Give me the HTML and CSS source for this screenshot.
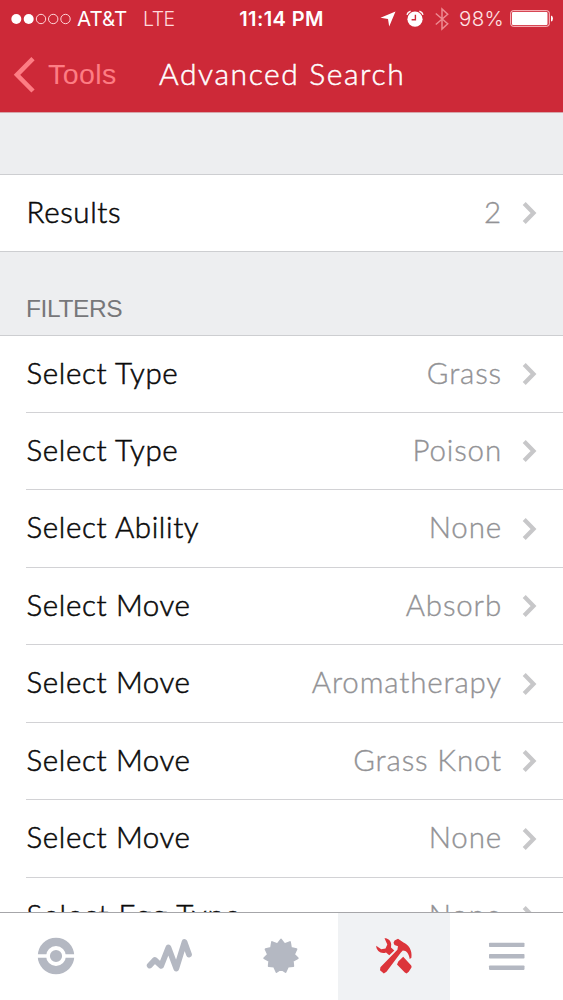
FILE: index.html
```html
<!DOCTYPE html>
<html lang="en">
<head>
<meta charset="utf-8">
<title>Advanced Search</title>
<link rel="stylesheet" href="styles.css">
</head>
<body>
<svg width="0" height="0" class="defs"><defs>
<symbol id="chev" viewBox="0 0 16 24"><path d="M2.2 2.6 11.5 12 2.2 21.4" fill="none" stroke="#c7c7c9" stroke-width="4.2"/></symbol>
</defs></svg>
<div class="screen">
  <header class="top">
    <div class="status">
      <div class="status-left">
        <svg class="signal" width="62" height="12" viewBox="0 0 62 12"><g fill="#fff"><circle cx="5.3" cy="6" r="5"/><circle cx="17.7" cy="6" r="5"/></g><g fill="none" stroke="#ffd5d8" stroke-width="1"><circle cx="30" cy="6" r="4.7"/><circle cx="42.2" cy="6" r="4.7"/><circle cx="54.5" cy="6" r="4.7"/></g></svg>
        <span class="carrier">AT&amp;T</span><span class="net">LTE</span>
      </div>
      <div class="time">11:14 PM</div>
      <div class="status-right">
        <svg width="16" height="16" viewBox="0 0 16 16"><path d="M15.5 .5 9.2 15.5 8 8 .5 6.8z" fill="#fff"/></svg>
        <svg class="alarm" width="18" height="18" viewBox="0 0 18 18"><circle cx="9" cy="9.2" r="7.6" fill="#fff"/><path d="M1 4.7Q1.7 2 4.6 1.3M17 4.7Q16.3 2 13.4 1.3" fill="none" stroke="#fff" stroke-width="1.5"/><path d="M9.4 4.8V9.8H5.6" fill="none" stroke="#cd2938" stroke-width="1.4"/></svg>
        <svg class="bt" width="14" height="24" viewBox="0 0 14 24"><path d="M.8 6.5 12.7 16.8 7 22V2L12.7 7.2.8 17.5" fill="none" stroke="#ed8a91" stroke-width="1.5"/></svg>
        <span class="pct">98%</span>
        <svg class="battery" width="44" height="17" viewBox="0 0 44 17"><rect x=".7" y=".7" width="38.6" height="15.6" rx="2.5" fill="none" stroke="#ffc9cd" stroke-width="1"/><rect x="2" y="2" width="35.5" height="13" rx="1" fill="#fff"/><path d="M41 5.5Q43 6 43 8.5T41 11.5z" fill="#fff"/></svg>
      </div>
    </div>
    <nav class="nav">
      <div class="back"><svg width="24" height="36" viewBox="0 0 24 36"><path d="M20 1.7 4 17.8 20 34" fill="none" stroke="#fd7d84" stroke-width="4.6"/></svg><span>Tools</span></div>
      <h1>Advanced Search</h1>
    </nav>
  </header>
  <main class="content">
    <div class="gap"></div>
    <section class="group results">
      <div class="row"><span class="label">Results</span><span class="value">2</span><svg class="chev"><use href="#chev"/></svg></div>
    </section>
    <h2>FILTERS</h2>
    <section class="group filters">
      <div class="row"><span class="label">Select Type</span><span class="value">Grass</span><svg class="chev"><use href="#chev"/></svg></div>
      <div class="row"><span class="label">Select Type</span><span class="value">Poison</span><svg class="chev"><use href="#chev"/></svg></div>
      <div class="row"><span class="label">Select Ability</span><span class="value">None</span><svg class="chev"><use href="#chev"/></svg></div>
      <div class="row"><span class="label">Select Move</span><span class="value">Absorb</span><svg class="chev"><use href="#chev"/></svg></div>
      <div class="row"><span class="label">Select Move</span><span class="value">Aromatherapy</span><svg class="chev"><use href="#chev"/></svg></div>
      <div class="row"><span class="label">Select Move</span><span class="value">Grass Knot</span><svg class="chev"><use href="#chev"/></svg></div>
      <div class="row"><span class="label">Select Move</span><span class="value">None</span><svg class="chev"><use href="#chev"/></svg></div>
      <div class="row"><span class="label wide">Select Egg Type</span><span class="value">None</span><svg class="chev"><use href="#chev"/></svg></div>
    </section>
  </main>
  <footer class="tabs">
    <div class="tab"><svg width="38" height="38" viewBox="0 0 38 38"><circle cx="19" cy="19" r="18.3" fill="#b4b8c2"/><path d="M0 19H38" stroke="#fff" stroke-width="3.6"/><circle cx="19" cy="19" r="8" fill="#b4b8c2" stroke="#fff" stroke-width="3.8"/></svg></div>
    <div class="tab"><svg width="46" height="38" viewBox="0 0 46 38"><path d="M3.7 27.5 8.8 22 15.2 27.8 22.4 9.5 30.3 30.5 38.5 4 43 16.5" transform="translate(0 1)" fill="none" stroke="#b4b8c2" stroke-width="5.8" stroke-linecap="round" stroke-linejoin="round"/></svg></div>
    <div class="tab"><svg width="38" height="38" viewBox="-19 -19 38 38"><path d="M0-16.5 3.7-11.8 9-14 10-8.2 15.5-6.8 13-1.5 16.8 2.2 11.8 5 12.3 10.2 7 10.7 4.6 16 0 13-4.6 16-7 10.7-12.3 10.2-11.8 5-16.8 2.2-13-1.5-15.5-6.8-10-8.2-9-14-3.7-11.8z" fill="#b4b8c2" stroke="#b4b8c2" stroke-width="1.8" stroke-linejoin="round"/></svg></div>
    <div class="tab active"><svg width="38" height="38" viewBox="0 0 38 38"><g fill="#dc343a"><path d="M9.5 1.2C12.8 1 16 3.7 16.2 7.2L16 10.4 19.3 13.5 14.3 18.2 11 15.4C6.5 17.5 1.2 14 1.2 8.8L6.2 12.2 10.5 11.4 12.3 7.4z"/><path d="M23.3 24.4 28.2 19.8 36.2 28.5Q37.2 30 36 31.3L33.7 34.8 31.6 36.6 29.8 35.6 22 27.4z"/><path d="M19.6 3.4 23 1.7 28.5 5.5C33.5 7.8 37.5 13 36.4 20.8L34.7 22C34 17 31.5 13.6 27.8 13.6L25.7 15.8 11.5 34.7 8.8 36.6 5 33.3 5.4 30.3 22.4 12.7 23 9.3 19.5 8 18.5 5.8z"/></g></svg></div>
    <div class="tab"><svg width="38" height="38" viewBox="0 0 38 38"><g fill="#b4b8c2"><rect x="1" y="5.7" width="35.5" height="4.4" rx=".8"/><rect x="1" y="17" width="35.5" height="4.6" rx=".8"/><rect x="1" y="28.5" width="35.5" height="4.4" rx=".8"/></g></svg></div>
  </footer>
</div>
</body>
</html>
```
FILE: styles.css
```css
* { box-sizing: border-box; }
body { margin: 0; font-family: Lato, sans-serif; background: #fff; }
.defs { display: none; }
svg { display: block; flex: none; }
.screen { width: 563px; height: 1000px; display: flex; flex-direction: column; overflow: hidden; }
.top { flex: none; height: 113px; background: #cd2938; color: #fff; border-bottom: 1px solid #d6a6ab; }
.status { height: 37px; display: grid; grid-template-columns: 1fr auto 1fr; align-items: center; font: 20px/24px Inter, sans-serif; white-space: nowrap; }
.status-left { display: flex; align-items: center; padding-left: 11px; }
.carrier { margin-left: 4px; width: 66px; font-size: 20.5px; letter-spacing: 0; }
.net { font-weight: 300; font-size: 19.5px; letter-spacing: -.5px; color: #ffd9dc; }
.time { font-weight: 600; font-size: 20px; letter-spacing: .4px; }
.status-right { display: flex; align-items: center; justify-content: flex-end; padding-right: 9px; }
.alarm { margin-left: 10px; }
.bt { margin-left: 11px; }
.pct { margin: 0 6px 0 10px; font-weight: 300; font-size: 20.5px; letter-spacing: .3px; color: #ffe3e5; }
.nav { height: 75px; display: grid; grid-template-columns: 159px 1fr; align-items: center; }
.back { display: flex; align-items: center; padding-left: 13px; color: #fd7d84; font: 28.5px/34px "Liberation Sans", sans-serif; }
.back span { margin-left: 11px; padding-bottom: 2px; letter-spacing: .4px; }
h1 { margin: 0 0 4px; font-size: 30px; line-height: 36px; font-weight: 300; -webkit-text-stroke: .5px; letter-spacing: 1.6px; white-space: nowrap; }
.content { flex: 1; min-height: 0; overflow: hidden; background: #edeef0; }
.gap { height: 61px; }
.group { background: #fff; border-top: 1px solid #cdced1; }
.results { border-bottom: 1px solid #cdced1; }
.results .row { height: 76px; }
.row { height: 77.5px; margin-left: 26px; display: flex; align-items: center; border-bottom: 1px solid #d2d2d5; padding-top: 1px; }
.filters .row:first-child { height: 76.6px; }
.results .row { padding-top: 0; }
.results .row, .row:last-child { border-bottom: 0; }
.label, .value { font-size: 29.5px; line-height: 36px; padding-bottom: 3px; font-weight: 300; white-space: nowrap; }
.label { flex: 1; padding-left: .6px; color: #0a0a0a; letter-spacing: .62px; -webkit-text-stroke: .55px; }
.wide { letter-spacing: 1px; }
.value { color: #929295; letter-spacing: .85px; -webkit-text-stroke: .35px; }
.chev { width: 16px; height: 24px; margin: 0 25px 0 20px; }
h2 { margin: 0; height: 83px; padding: 42px 0 0 26px; font: 24.5px/30px "Liberation Sans", sans-serif; letter-spacing: -.4px; color: #77777a; }
.tabs { flex: none; height: 88px; display: grid; grid-template-columns: repeat(5, 1fr); border-top: 1px solid #a6a6a9; background: #fff; }
.tab { display: flex; align-items: center; justify-content: center; padding-bottom: 1px; }
.active { background: #f0f2f4; }
```
